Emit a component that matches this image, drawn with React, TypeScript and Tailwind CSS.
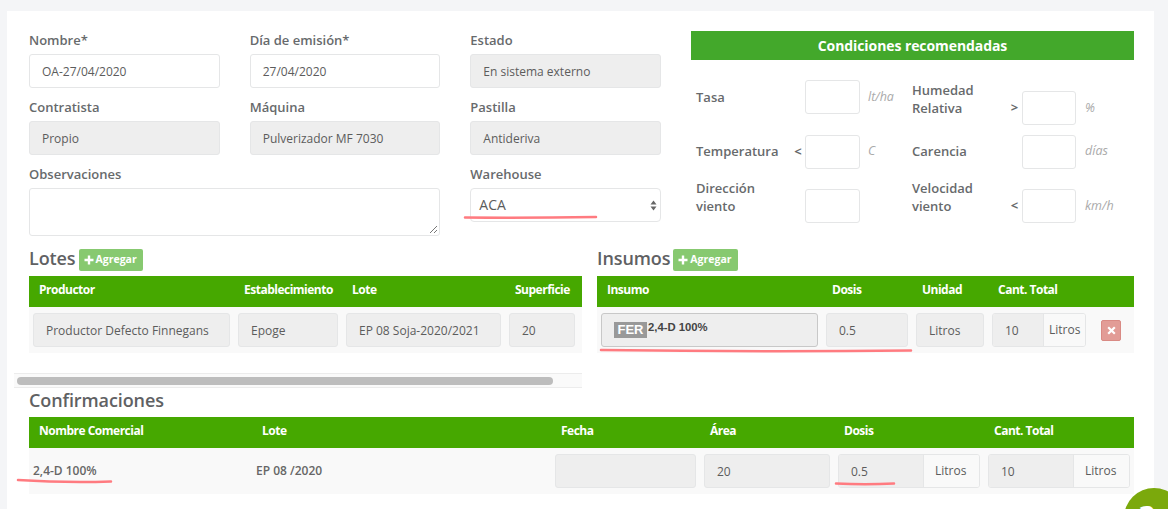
import React from "react";

const font = { fontFamily: '"Open Sans", sans-serif' };

const inputBase =
  "h-[34px] rounded-[3px] border border-[#e5e6e7] px-[12px] pt-[1px] flex items-center text-[12px] text-[#5c5c5c] whitespace-nowrap overflow-hidden";

const labelCls = "h-[23px] text-[13px] leading-[18px] font-semibold text-[#676a6c]";

function Field({ label, value, disabled }: { label: string; value: string; disabled?: boolean }) {
  return (
    <div className="mb-[10px]">
      <div className={labelCls}>{label}</div>
      <div className={`${inputBase} ${disabled ? "bg-[#eeeeee]" : "bg-white"}`}>{value}</div>
    </div>
  );
}

function Cell({ value }: { value: string }) {
  return <div className={`${inputBase} bg-[#eeeeee]`}>{value}</div>;
}

function AddonCell({ value, inputW, addonPad }: { value: string; inputW: string; addonPad: string }) {
  return (
    <div className="h-[34px] flex rounded-[3px] border border-[#e5e6e7] text-[12px] text-[#5c5c5c] overflow-hidden">
      <div className={`${inputW} bg-[#eeeeee] flex items-center pl-[12px] pt-[1px]`}>{value}</div>
      <div className={`flex-1 bg-[#f9f9f9] border-l border-[#e5e6e7] flex items-center ${addonPad}`}>Litros</div>
    </div>
  );
}

function Heading({ title, add, leading }: { title: string; add?: boolean; leading: string }) {
  return (
    <div className="h-[29px] flex items-start gap-[3px]">
      <span className={`text-[18px] ${leading} font-semibold text-[#5f6163] tracking-[-0.1px]`}>{title}</span>
      {add && (
        <span className="mt-[2px] h-[22px] pl-[5px] pr-[6px] rounded-[2px] bg-[#87c970] text-white text-[10.5px] font-bold flex items-center gap-[2px]">
          <svg width="10" height="10" viewBox="0 0 10 10" aria-hidden="true">
            <path d="M5 0.5v9M0.5 5h9" stroke="#fff" strokeWidth="2.4" />
          </svg>
          Agregar
        </span>
      )}
    </div>
  );
}

function HeadCell({ children }: { children?: React.ReactNode }) {
  return <div className="pl-[6px] pb-[3px] text-[12px] font-bold text-white whitespace-nowrap tracking-[-0.5px]">{children}</div>;
}

function CondRow({
  label,
  sign,
  unit,
  two,
  raised,
  narrow,
}: {
  label: React.ReactNode;
  sign?: string;
  unit?: string;
  two?: boolean;
  raised?: boolean;
  narrow?: boolean;
}) {
  return (
    <div className={`grid grid-rows-[34px] items-center ${narrow ? "grid-cols-[94px_16px_54px_1fr]" : "grid-cols-[93px_16px_55px_1fr]"}`}>
      <div className={`text-[13px] leading-[18px] font-semibold text-[#676a6c] ${two ? "mb-[19px]" : raised ? "mb-[2px]" : ""}`}>
        {label}
      </div>
      <div className={`text-[13px] font-bold text-[#676a6c] text-center ${narrow ? "pl-[1px]" : "pl-[2px]"}`}>{sign}</div>
      <div className="h-[34px] rounded-[3px] border border-[#e5e6e7] bg-white" />
      <div className={`text-[12.5px] italic text-[#aaaaaa] ${narrow ? "pl-[9px]" : "pl-[8px]"} ${raised ? "mb-[2px]" : ""}`}>{unit}</div>
    </div>
  );
}

const lotesCols = "grid grid-cols-[197px_100px_155px_66px] gap-x-[8px] pl-[4px]";
const insumosCols = "grid grid-cols-[217px_82px_68px_94px_20px] gap-x-[8px] pl-[4px]";
const confCols = "grid grid-cols-[215px_291px_141px_126px_142px_142px] gap-x-[8px] pl-[4px]";
const headBar = "h-[31px] bg-[#46a800] items-center";
const rowBar = "h-[46px] bg-[#f9f9f9] items-center";

export default function App() {
  return (
    <div style={font} className="relative h-[509px] w-[1168px] overflow-hidden bg-[#f4f5f7] pl-[7px] pr-[14px] pt-[11px]">
      <div className="h-[520px] bg-white">
        {/* Form */}
        <div className="flex h-[236px] pl-[22px] pt-[20px]">
          <div className="w-[632px]">
            <div className="grid grid-cols-3 gap-x-[30px]">
              <Field label="Nombre*" value="OA-27/04/2020" />
              <Field label="Día de emisión*" value="27/04/2020" />
              <Field label="Estado" value="En sistema externo" disabled />
              <Field label="Contratista" value="Propio" disabled />
              <Field label="Máquina" value="Pulverizador MF 7030" disabled />
              <Field label="Pastilla" value="Antideriva" disabled />
              <div className="col-span-2">
                <div className={labelCls}>Observaciones</div>
                <div className="relative h-[48px] rounded-[3px] border border-[#e5e6e7] bg-white">
                  <svg className="absolute bottom-[1px] right-[1px]" width="9" height="9" viewBox="0 0 9 9" aria-hidden="true">
                    <path d="M1 8L8 1M5 8L8 5" stroke="#777" strokeWidth="1" />
                  </svg>
                </div>
              </div>
              <div>
                <div className={labelCls}>Warehouse</div>
                <div className="h-[34px] rounded-[4px] border border-[#e5e6e7] bg-white pl-[8px] pr-[3px] pb-[2px] flex items-center justify-between text-[14px] text-[#5c5c5c]">
                  ACA
                  <svg className="mt-[2px]" width="7" height="13" viewBox="0 0 7 13" aria-hidden="true">
                    <path d="M3.5 1.5L6.5 5.5H.5zM3.5 11.5L.5 7.5h6z" fill="#666" />
                  </svg>
                </div>
              </div>
            </div>
          </div>
          <div className="ml-[30px] w-[443px]">
            <div className="h-[29px] bg-[#43a82b] flex items-center justify-center text-[14px] font-bold tracking-[-0.08px] text-white">
              Condiciones recomendadas
            </div>
            <div className="mt-[20px] grid grid-cols-[216px_1fr] pl-[5px]">
              <div className="h-[55px]">
                <CondRow label="Tasa" unit="lt/ha" />
              </div>
              <div className="h-[55px] pt-[11px]">
                <CondRow narrow two label={<>Humedad<br />Relativa</>} sign=">" unit="%" />
              </div>
              <div className="h-[54px]">
                <CondRow raised label="Temperatura" sign="<" unit="C" />
              </div>
              <div className="h-[54px]">
                <CondRow narrow raised label="Carencia" unit="días" />
              </div>
              <div>
                <CondRow two label={<>Dirección<br />viento</>} />
              </div>
              <div>
                <CondRow narrow two label={<>Velocidad<br />viento</>} sign="<" unit="km/h" />
              </div>
            </div>
          </div>
        </div>

        {/* Lotes + Insumos */}
        <div className="flex pl-[7px]">
          <div className="w-[568px]">
            <div className="pl-[15px]">
              <Heading title="Lotes" add leading="leading-[22px]" />
              <div className={`${lotesCols} ${headBar}`}>
                <HeadCell>Productor</HeadCell>
                <HeadCell>Establecimiento</HeadCell>
                <HeadCell>Lote</HeadCell>
                <HeadCell>Superficie</HeadCell>
              </div>
              <div className={`${lotesCols} ${rowBar}`}>
                <Cell value="Productor Defecto Finnegans" />
                <Cell value="Epoge" />
                <Cell value="EP 08 Soja-2020/2021" />
                <Cell value="20" />
              </div>
            </div>
            <div className="mt-[20px] h-[15px] border-y border-[#ececec] bg-[#fafafa] pl-[3px] pt-[3px]">
              <div className="h-[8px] w-[536px] rounded-full bg-[#bdbdbd]" />
            </div>
          </div>
          <div className="ml-[15px] w-[537px]">
            <Heading title="Insumos" add leading="leading-[22px]" />
            <div className={`${insumosCols} ${headBar}`}>
              <HeadCell>Insumo</HeadCell>
              <HeadCell>Dosis</HeadCell>
              <HeadCell>Unidad</HeadCell>
              <HeadCell>Cant. Total</HeadCell>
              <HeadCell />
            </div>
            <div className={`${insumosCols} ${rowBar}`}>
              <div
                style={{ fontFamily: '"Liberation Sans", sans-serif' }}
                className="h-[34px] rounded-[3px] border border-[#c8c8c8] bg-[#eeeeee] pl-[12px] pt-[8px] flex items-start text-[11.3px] font-bold leading-[12px] text-[#444]"
              >
                <span className="h-[16px] w-[33px] bg-[#999999] text-white text-[13px] leading-[16px] text-center">FER</span>
                <span className="ml-[1px] -mt-[1px]">2,4-D 100%</span>
              </div>
              <Cell value="0.5" />
              <Cell value="Litros" />
              <AddonCell value="10" inputW="w-[50px]" addonPad="pl-[5px]" />
              <div className="ml-[7px] h-[21px] w-[20px] rounded-[2px] border border-[#d98a84] bg-[#e29c96] flex items-center justify-center">
                <svg width="9" height="9" viewBox="0 0 9 9" aria-hidden="true">
                  <path d="M1.2 1.2l6.6 6.6M7.8 1.2L1.2 7.8" stroke="#fff" strokeWidth="2.2" />
                </svg>
              </div>
            </div>
          </div>
        </div>

        {/* Confirmaciones */}
        <div className="ml-[22px] w-[1105px]">
          <Heading title="Confirmaciones" leading="leading-[24px]" />
          <div className={`${confCols} ${headBar}`}>
            <HeadCell>Nombre Comercial</HeadCell>
            <HeadCell>Lote</HeadCell>
            <HeadCell>Fecha</HeadCell>
            <HeadCell>Área</HeadCell>
            <HeadCell>Dosis</HeadCell>
            <HeadCell>Cant. Total</HeadCell>
          </div>
          <div className={`${confCols} ${rowBar}`}>
            <div className="text-[12px] font-semibold text-[#666]">2,4-D 100%</div>
            <div className="text-[12px] font-semibold text-[#666]">EP 08 /2020</div>
            <Cell value="" />
            <Cell value="20" />
            <AddonCell value="0.5" inputW="w-[84px]" addonPad="pl-[11px]" />
            <AddonCell value="10" inputW="w-[84px]" addonPad="pl-[11px]" />
          </div>
        </div>
      </div>

      {/* Hand-drawn annotations */}
      <svg className="pointer-events-none absolute left-0 top-0" width="1168" height="509" aria-hidden="true">
        <g stroke="#ff7b80" strokeWidth="2.5" strokeLinecap="round" fill="none">
          <path d="M465 217.5Q530 218 596 217" />
          <path d="M601 350Q760 352 911 350.5" />
          <path d="M18 480Q65 483 111 481.5" />
          <path d="M836 483.5Q865 485 894 483.5" />
        </g>
      </svg>

      {/* Help bubble */}
      <div className="absolute left-[1124px] top-[488px] h-[60px] w-[60px] rounded-full bg-[#7ba90c] pt-[9px] pl-[16px] text-[30px] font-bold leading-[40px] text-white">
        ?
      </div>
    </div>
  );
}
